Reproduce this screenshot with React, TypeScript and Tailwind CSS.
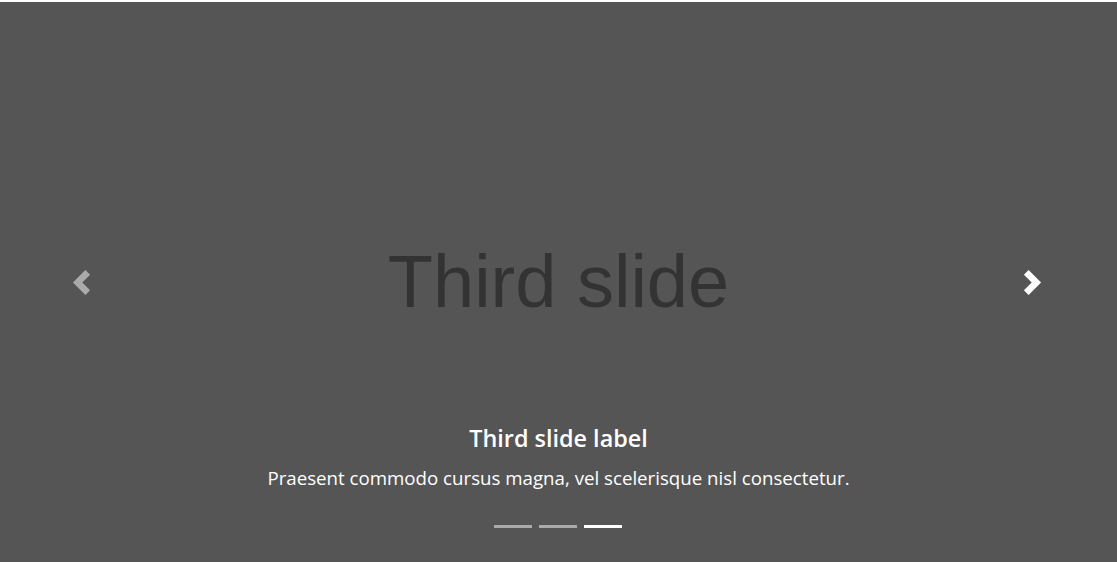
import { useState } from 'react';

const slides = [
  { title: 'First slide', label: 'First slide label', text: 'Nulla vitae elit libero, a pharetra augue mollis interdum.' },
  { title: 'Second slide', label: 'Second slide label', text: 'Lorem ipsum dolor sit amet, consectetur adipiscing elit.' },
  { title: 'Third slide', label: 'Third slide label', text: 'Praesent commodo cursus magna, vel scelerisque nisl consectetur.' },
];

export default function App() {
  const [active, setActive] = useState(2);
  const slide = slides[active];

  const prev = () => setActive((active + slides.length - 1) % slides.length);
  const next = () => setActive((active + 1) % slides.length);

  return (
    <div className="w-[1117px] h-[562px] bg-white pt-[2px] overflow-hidden">
      <div className="relative h-[560px] bg-[#555555] flex items-center justify-center">
        {/* Slide placeholder */}
        <span className="font-['Liberation_Sans',Arial,sans-serif] text-[74px] leading-none text-[#333333] pb-[1px]">
          {slide.title}
        </span>

        {/* Controls */}
        <button
          onClick={prev}
          className="absolute left-0 top-0 bottom-0 w-[15%] flex items-center justify-center opacity-50 hover:opacity-90"
        >
          <svg viewBox="0 0 8 8" className="w-[25px] h-[25px] mr-[4px]" fill="#ffffff">
            <path d="M5.25 0l-4 4 4 4 1.5-1.5L4.25 4l2.5-2.5L5.25 0z" />
          </svg>
        </button>
        <button
          onClick={next}
          className="absolute right-0 top-0 bottom-0 w-[15%] flex items-center justify-center opacity-100"
        >
          <svg viewBox="0 0 8 8" className="w-[25px] h-[25px] mr-[2px]" fill="#ffffff">
            <path d="M2.75 0l-1.5 1.5L3.75 4l-2.5 2.5L2.75 8l4-4-4-4z" />
          </svg>
        </button>

        {/* Caption */}
        <div className="absolute left-[15%] right-[15%] top-[421px] text-center text-white font-['Open_Sans','Noto_Sans',sans-serif]">
          <h5 className="text-[23.4px] leading-[30px] font-semibold mb-[12px]">{slide.label}</h5>
          <p className="text-[18.7px] leading-[26px]">{slide.text}</p>
        </div>

        {/* Indicators */}
        <div className="absolute left-0 right-0 top-[523px] flex justify-center gap-[7px] pr-[1px]">
          {slides.map((s, i) => (
            <button
              key={s.title}
              onClick={() => setActive(i)}
              className={
                'w-[38px] h-[3px] bg-white ' + (i === active ? 'opacity-100' : 'opacity-50')
              }
            />
          ))}
        </div>
      </div>
    </div>
  );
}
